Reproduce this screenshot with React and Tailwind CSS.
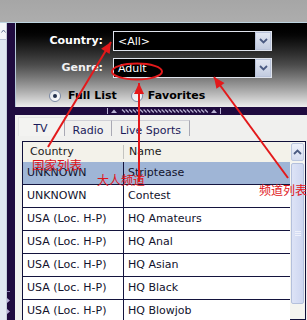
import React from 'react';

const RED = '#e3191b';

const head = (x1, y1, x2, y2, len = 11, half = 5) => {
  const dx = x2 - x1;
  const dy = y2 - y1;
  const d = Math.hypot(dx, dy);
  const ux = dx / d;
  const uy = dy / d;
  const bx = x2 - ux * len;
  const by = y2 - uy * len;
  return `${x2},${y2} ${bx - uy * half},${by + ux * half} ${bx + uy * half},${by - ux * half}`;
};

const Arrow = ({ from, to }) => (
  <g>
    <line x1={from[0]} y1={from[1]} x2={to[0]} y2={to[1]} stroke={RED} strokeWidth="2" />
    <polygon points={head(from[0], from[1], to[0], to[1])} fill={RED} />
  </g>
);

const Chevron = ({ up }) => (
  <svg width="9" height="6" viewBox="0 0 9 6">
    <path d={up ? 'M1 5 L4.5 1.5 L8 5' : 'M1 1 L4.5 4.5 L8 1'} fill="none" stroke="#4b5b82" strokeWidth="1.8" />
  </svg>
);

const Select = ({ value }) => (
  <div className="w-[159px] h-[20px] border border-[#dfe3ec] bg-black flex items-center">
    <span className="flex-1 pl-[4px] text-white leading-none">{value}</span>
    <div className="w-[16px] h-[18px] bg-linear-to-b from-[#e2e7f2] to-[#c3cce0] border border-[#b9c3da] flex items-center justify-center">
      <Chevron />
    </div>
  </div>
);

const Radio = ({ checked }) => (
  <div className="w-[12px] h-[12px] rounded-full border border-[#7d8ba6] bg-linear-to-br from-[#dfe3ea] to-white flex items-center justify-center">
    {checked && <div className="w-[4px] h-[4px] rounded-full bg-[#22304d]" />}
  </div>
);

const rows = [
  ['UNKNOWN', 'Striptease', true],
  ['UNKNOWN', 'Contest'],
  ['USA (Loc. H-P)', 'HQ Amateurs'],
  ['USA (Loc. H-P)', 'HQ Anal'],
  ['USA (Loc. H-P)', 'HQ Asian'],
  ['USA (Loc. H-P)', 'HQ Black'],
  ['USA (Loc. H-P)', 'HQ Blowjob'],
];

export default function App() {
  return (
    <div className="w-[307px] h-[320px] relative overflow-hidden bg-[#f0f0ee] font-['DejaVu_Sans',sans-serif] text-[11px]">
      {/* top bar */}
      <div className="h-[23px] bg-linear-to-b from-[#a6a6a6] to-[#adadad] border-b border-[#bcd3e0]" />

      <div className="flex h-[297px]">
        {/* left scroller */}
        <div className="w-[7px] flex flex-col bg-[#e2e8f2] border-r border-[#c6cedc]">
          <div className="h-[17px] bg-[#f4f6fa] border-b border-[#b9c3d6] flex items-center justify-center">
            <svg width="5" height="4" viewBox="0 0 5 4">
              <path d="M0.5 3.5 L2.5 1 L4.5 3.5" fill="none" stroke="#6a7a98" strokeWidth="1" />
            </svg>
          </div>
        </div>
        <div className="w-[8px] bg-[#1f0b3f] flex flex-col justify-end items-start pb-[6px] gap-[6px]">
          <div className="w-[3px] h-px bg-[#8a7fb0]" />
          <svg width="4" height="5" viewBox="0 0 4 5"><path d="M0 0 L3 2.5 L0 5Z" fill="#b8b0d8" /></svg>
          <svg width="4" height="5" viewBox="0 0 4 5"><path d="M0 0 L3 2.5 L0 5Z" fill="#b8b0d8" /></svg>
        </div>

        <div className="flex-1 flex flex-col min-w-0">
          {/* filter panel */}
          <div className="h-[84px] border-l border-[#b6c9d8] bg-linear-to-b from-[#000000] via-[#4c4c4c] via-50% to-[#ededed] pt-[8px]">
            <div className="flex items-center">
              <span className="w-[87px] text-right font-bold text-white">Country:</span>
              <div className="ml-[10px]"><Select value="<All>" /></div>
            </div>
            <div className="flex items-center mt-[7px]">
              <span className="w-[87px] text-right font-bold text-[#f2f2f2]">Genre:</span>
              <div className="ml-[10px]"><Select value="Adult" /></div>
            </div>
            <div className="flex items-center mt-[10px] pl-[33px] font-bold text-black">
              <Radio checked />
              <span className="ml-[7px]">Full List</span>
              <div className="ml-[14px]"><Radio /></div>
              <span className="ml-[5px]">Favorites</span>
            </div>
          </div>

          {/* splitter */}
          <div className="h-[8px] bg-[#1f0b3f] flex items-center pl-[92px]">
            <svg width="115" height="6" viewBox="0 0 115 6">
              <rect x="0" y="0" width="1" height="6" fill="#b9b2d4" />
              <path d="M4 5 L7 1.5 L10 5Z" fill="#b9b2d4" />
              {Array.from({ length: 24 }).map((_, i) => (
                <path key={i} d={`M${15 + i * 3.6} 1.5 L${18 + i * 3.6} 4.5`} stroke="#b9b2d4" strokeWidth="1.2" />
              ))}
              <path d="M104 5 L107 1.5 L110 5Z" fill="#b9b2d4" />
              <rect x="113" y="0" width="1" height="6" fill="#b9b2d4" />
            </svg>
          </div>

          {/* tabs + list */}
          <div className="flex-1 flex flex-col min-h-0 bg-[#f0f0ee]">
            <div className="flex items-end h-[21px] pl-[3px] text-[#1b1b5a]">
              <div className="w-[47px] h-[19px] flex items-start justify-center pt-[3px] bg-[#f3f3f1] border-t border-l border-[#e4e4e4] border-r border-r-[#a9a9b4]">
                <span className="ml-[-2px]">TV</span>
              </div>
              <div className="w-[47px] h-[16px] flex items-start justify-center pt-[2px] border-t border-[#d0d0d6] border-r border-r-[#a9a9b4]">
                Radio
              </div>
              <div className="w-[78px] h-[16px] flex items-start justify-center pt-[2px] border-t border-[#d0d0d6] border-r border-r-[#a9a9b4]">
                Live Sports
              </div>
            </div>

            <div className="flex-1 min-h-0 pt-[5px] pl-[7px] pr-[1px]">
              <div className="h-full border border-[#10103a] flex bg-white">
                <div className="w-[267px] flex flex-col">
                  <div className="h-[20px] flex items-center bg-[#f3f2ea] text-[#1a1a1a] shrink-0">
                    <span className="w-[100px] pl-[7px]">Country</span>
                    <div className="w-px h-[14px] bg-[#c4c4c0]" />
                    <span className="pl-[5px]">Name</span>
                  </div>
                  {rows.map(([country, name, sel], i) => (
                    <div
                      key={i}
                      className={`h-[23px] shrink-0 flex border-b border-[#14143e] text-[#12122c] ${sel ? 'bg-[#9fb5d6]' : 'bg-white'}`}
                    >
                      <span className="w-[100px] pl-[4px] flex items-center">{country}</span>
                      <div className="w-px bg-[#14143e]" />
                      <span className="pl-[4px] flex items-center">{name}</span>
                    </div>
                  ))}
                </div>

                {/* scrollbar */}
                <div className="w-[15px] flex flex-col bg-[#f4f4f0] px-px">
                  <div className="h-[18px] mt-px rounded-[2px] border border-[#bcc7df] bg-linear-to-b from-[#eef1fa] to-[#d6ddf1] flex items-center justify-center">
                    <Chevron up />
                  </div>
                  <div className="h-[141px] mt-[2px] rounded-[2px] border border-[#b4c0dc] bg-linear-to-r from-[#dde3f6] to-[#cdd6f0] flex items-center justify-center">
                    <div className="flex flex-col gap-px">
                      <div className="w-[6px] h-px bg-[#eef1fb]" />
                      <div className="w-[6px] h-px bg-[#eef1fb]" />
                      <div className="w-[6px] h-px bg-[#eef1fb]" />
                    </div>
                  </div>
                </div>
              </div>
            </div>
          </div>
        </div>
      </div>

      {/* red annotations */}
      <svg className="absolute inset-0 pointer-events-none" width="307" height="320" viewBox="0 0 307 320">
        <Arrow from={[48, 147]} to={[111, 42]} />
        <Arrow from={[139, 182]} to={[139, 83]} />
        <Arrow from={[288, 178]} to={[214, 77]} />
        <ellipse cx="137" cy="71.5" rx="25" ry="8" fill="none" stroke={RED} strokeWidth="2" />
      </svg>
      <span className="absolute left-[32px] top-[159px] text-[12.5px] leading-none text-[#e0141a] font-['Noto_Sans_CJK_SC',sans-serif]">国家列表</span>
      <span className="absolute left-[97px] top-[174px] text-[12px] leading-none text-[#e0141a] font-['Noto_Sans_CJK_SC',sans-serif]">大人频道</span>
      <span className="absolute left-[259px] top-[184px] text-[12px] leading-none text-[#e0141a] font-['Noto_Sans_CJK_SC',sans-serif]">频道列表</span>
    </div>
  );
}
